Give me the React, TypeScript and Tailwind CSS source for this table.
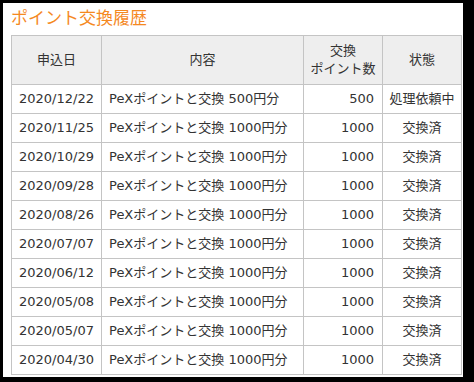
import React from 'react';

interface HistoryRow {
  date: string;
  content: string;
  points: number;
  status: string;
}

const ROWS: HistoryRow[] = [
  { date: '2020/12/22', content: 'PeXポイントと交換 500円分', points: 500, status: '処理依頼中' },
  { date: '2020/11/25', content: 'PeXポイントと交換 1000円分', points: 1000, status: '交換済' },
  { date: '2020/10/29', content: 'PeXポイントと交換 1000円分', points: 1000, status: '交換済' },
  { date: '2020/09/28', content: 'PeXポイントと交換 1000円分', points: 1000, status: '交換済' },
  { date: '2020/08/26', content: 'PeXポイントと交換 1000円分', points: 1000, status: '交換済' },
  { date: '2020/07/07', content: 'PeXポイントと交換 1000円分', points: 1000, status: '交換済' },
  { date: '2020/06/12', content: 'PeXポイントと交換 1000円分', points: 1000, status: '交換済' },
  { date: '2020/05/08', content: 'PeXポイントと交換 1000円分', points: 1000, status: '交換済' },
  { date: '2020/05/07', content: 'PeXポイントと交換 1000円分', points: 1000, status: '交換済' },
  { date: '2020/04/30', content: 'PeXポイントと交換 1000円分', points: 1000, status: '交換済' },
];

const App: React.FC = () => {
  return (
    <div className="w-[474px] h-[382px] bg-black pt-[3px] pl-[3px] pr-[11px] pb-[5px]">
      <div
        className="h-full bg-white pl-[8px] pr-[2px] text-[#333]"
        style={{ fontFamily: '"DejaVu Sans", "Noto Sans CJK JP", sans-serif' }}
      >
        {/* Title */}
        <h2 className="h-[32px] pt-[2px] text-[17px] leading-[26px] text-[#f5891f]">ポイント交換履歴</h2>

        {/* History table */}
        <table className="w-[450px] border-collapse text-[13px] table-fixed">
          <colgroup>
            <col className="w-[90px]" />
            <col className="w-[202px]" />
            <col className="w-[79px]" />
            <col className="w-[79px]" />
          </colgroup>
          <thead>
            <tr className="h-[49px] bg-[#eeeeee]">
              <th className="border border-[#c4c4c4] font-normal text-center">申込日</th>
              <th className="border border-[#c4c4c4] font-normal text-center">内容</th>
              <th className="border border-[#c4c4c4] font-normal text-center leading-[18px]">
                交換<br />ポイント数
              </th>
              <th className="border border-[#c4c4c4] font-normal text-center">状態</th>
            </tr>
          </thead>
          <tbody>
            {ROWS.map((row) => (
              <tr key={row.date} className="h-[29px]">
                <td className="border border-[#c4c4c4] text-center">{row.date}</td>
                <td className="border border-[#c4c4c4] px-[7px] whitespace-nowrap">{row.content}</td>
                <td className="border border-[#c4c4c4] px-[8px] text-right">{row.points}</td>
                <td className="border border-[#c4c4c4] text-center whitespace-nowrap">{row.status}</td>
              </tr>
            ))}
          </tbody>
        </table>
      </div>
    </div>
  );
};

export default App;
